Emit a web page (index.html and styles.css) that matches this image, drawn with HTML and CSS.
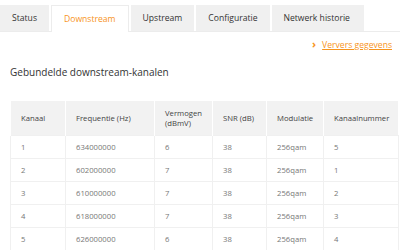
FILE: index.html
```html
<!DOCTYPE html>
<html lang="nl">
  <head>
    <meta charset="utf-8" />
    <title>Downstream</title>
    <link rel="stylesheet" href="styles.css">
  </head>
  <body>
    <ul class="tabs">
      <li class="tab">Status</li>
      <li class="tab active">Downstream</li>
      <li class="tab">Upstream</li>
      <li class="tab">Configuratie</li>
      <li class="tab">Netwerk historie</li>
    </ul>
    <div class="refresh">
      <a href="#"><span class="chevron">&#8250;</span>Ververs gegevens</a>
    </div>
    <h2 class="title">Gebundelde downstream-kanalen</h2>
    <table class="channels">
      <thead>
        <tr>
          <th class="c1">Kanaal</th>
          <th class="c2">Frequentie (Hz)</th>
          <th class="c3">Vermogen (dBmV)</th>
          <th class="c4">SNR (dB)</th>
          <th class="c5">Modulatie</th>
          <th class="c6">Kanaalnummer</th>
        </tr>
      </thead>
      <tbody>
        <tr><td>1</td><td>634000000</td><td>6</td><td>38</td><td>256qam</td><td>5</td></tr>
        <tr><td>2</td><td>602000000</td><td>7</td><td>38</td><td>256qam</td><td>1</td></tr>
        <tr><td>3</td><td>610000000</td><td>7</td><td>38</td><td>256qam</td><td>2</td></tr>
        <tr><td>4</td><td>618000000</td><td>7</td><td>38</td><td>256qam</td><td>3</td></tr>
        <tr><td>5</td><td>626000000</td><td>6</td><td>38</td><td>256qam</td><td>4</td></tr>
      </tbody>
    </table>
  </body>
</html>
```

FILE: styles.css
```css
body {
  margin: 0;
  font-family: "Open Sans", sans-serif;
  color: #333;
  background: #fff;
}

.tabs {
  display: flex;
  gap: 2px;
  margin: 0;
  padding: 5px 0 0 0;
  list-style: none;
  border-bottom: 1px solid #ececec;
  height: 26px;
}

.tab {
  background-color: #f0f0f0;
  font-size: 8.6px;
  line-height: 26px;
  padding: 0 12px;
  color: #333;
}

.tab:last-child {
  padding-right: 14px;
}

.tab.active {
  background-color: #fff;
  color: #f7941d;
  border: 1px solid #ececec;
  border-bottom: none;
  height: 26px;
}

.refresh {
  text-align: right;
  padding: 7px 8px 0 0;
  font-size: 8.6px;
  height: 15px;
}

.refresh a {
  color: #f7941d;
  text-decoration: underline;
}

.chevron {
  display: inline-block;
  margin-right: 6px;
  font-size: 11px;
  font-weight: bold;
  line-height: 8px;
  text-decoration: none;
}

.title {
  font-size: 10px;
  font-weight: normal;
  margin: 11px 0 0 10px;
}

.channels {
  margin: 22px 0 0 10px;
  width: 382px;
  border-collapse: collapse;
  font-size: 7.7px;
  table-layout: fixed;
}

.channels th {
  background-color: #f2f2f2;
  font-weight: normal;
  text-align: left;
  height: 34px;
  padding: 0 10px;
  border-left: 1px solid #fff;
  color: #444;
}

.channels td {
  height: 22px;
  padding: 0 10px;
  color: #777;
  border: 1px solid #f0f0f0;
}

.c1 { width: 34px; }
.c2 { width: 68px; }
.c3 { width: 37px; }
.c4 { width: 33px; }
.c5 { width: 36px; }
.c6 { width: 54px; }
```
